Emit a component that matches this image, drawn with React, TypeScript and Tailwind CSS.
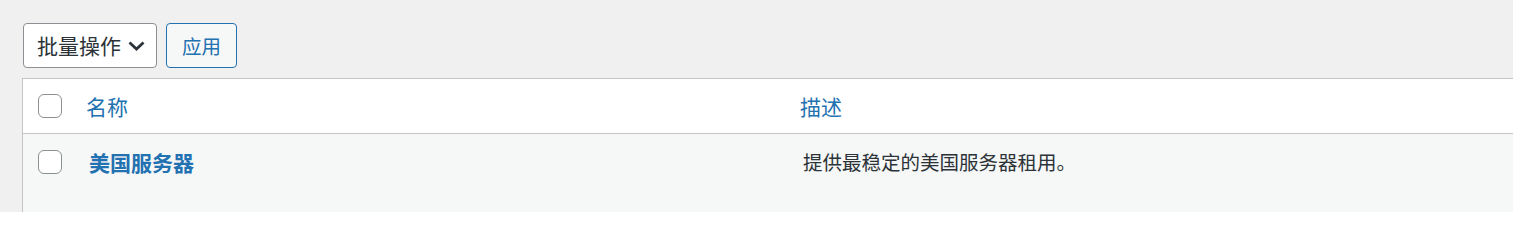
import React from 'react';

const font = { fontFamily: '"Noto Sans CJK SC", "Noto Sans", sans-serif' };

function Checkbox() {
  return (
    <span className="block h-[24px] w-[24px] shrink-0 rounded-[6px] border border-[#8c8f94] bg-white" />
  );
}

function Chevron() {
  return (
    <svg width="17" height="10" viewBox="0 0 17 10" fill="none" className="shrink-0">
      <path d="M1.5 1.5 L8.5 8 L15.5 1.5" stroke="#2c3338" strokeWidth="2.8" strokeLinejoin="miter" />
    </svg>
  );
}

export default function App() {
  return (
    <div
      className="h-[212px] w-full overflow-hidden bg-[#f0f0f1] pl-[22px] pt-[23px]"
      style={font}
    >
      <div className="flex h-[45px] gap-[9px] pl-px">
        <div className="flex h-[45px] w-[134px] items-center justify-between rounded-[4px] border border-[#8c8f94] bg-white pl-[13px] pr-[11px]">
          <span className="text-[21px] leading-none text-[#2c3338]">批量操作</span>
          <Chevron />
        </div>
        <button
          type="button"
          className="flex h-[45px] w-[71px] items-center justify-center rounded-[4px] border border-[#2271b1] bg-[#f6f7f7] text-[19.5px] leading-none text-[#2271b1]"
        >
          应用
        </button>
      </div>

      <div className="mt-[10px] w-[1600px] border-l border-t border-[#c3c4c7]">
        <div className="flex h-[55px] items-center border-b border-[#c3c4c7] bg-white pl-[15px]">
          <Checkbox />
          <span className="ml-[24px] w-[714px] text-[21px] leading-none text-[#2271b1]">名称</span>
          <span className="text-[21px] leading-none text-[#2271b1]">描述</span>
        </div>
        <div className="flex h-[90px] items-start bg-[#f6f7f7] pl-[15px] pt-[16px]">
          <Checkbox />
          <div className="ml-[24px] flex h-[24px] w-[714px] items-center pl-[3px]">
            <span className="text-[21px] font-bold leading-none text-[#2271b1]">美国服务器</span>
          </div>
          <div className="flex h-[24px] items-center pl-[3px]">
            <span className="text-[19.5px] leading-none text-[#2c3338]">提供最稳定的美国服务器租用。</span>
          </div>
        </div>
      </div>
    </div>
  );
}
